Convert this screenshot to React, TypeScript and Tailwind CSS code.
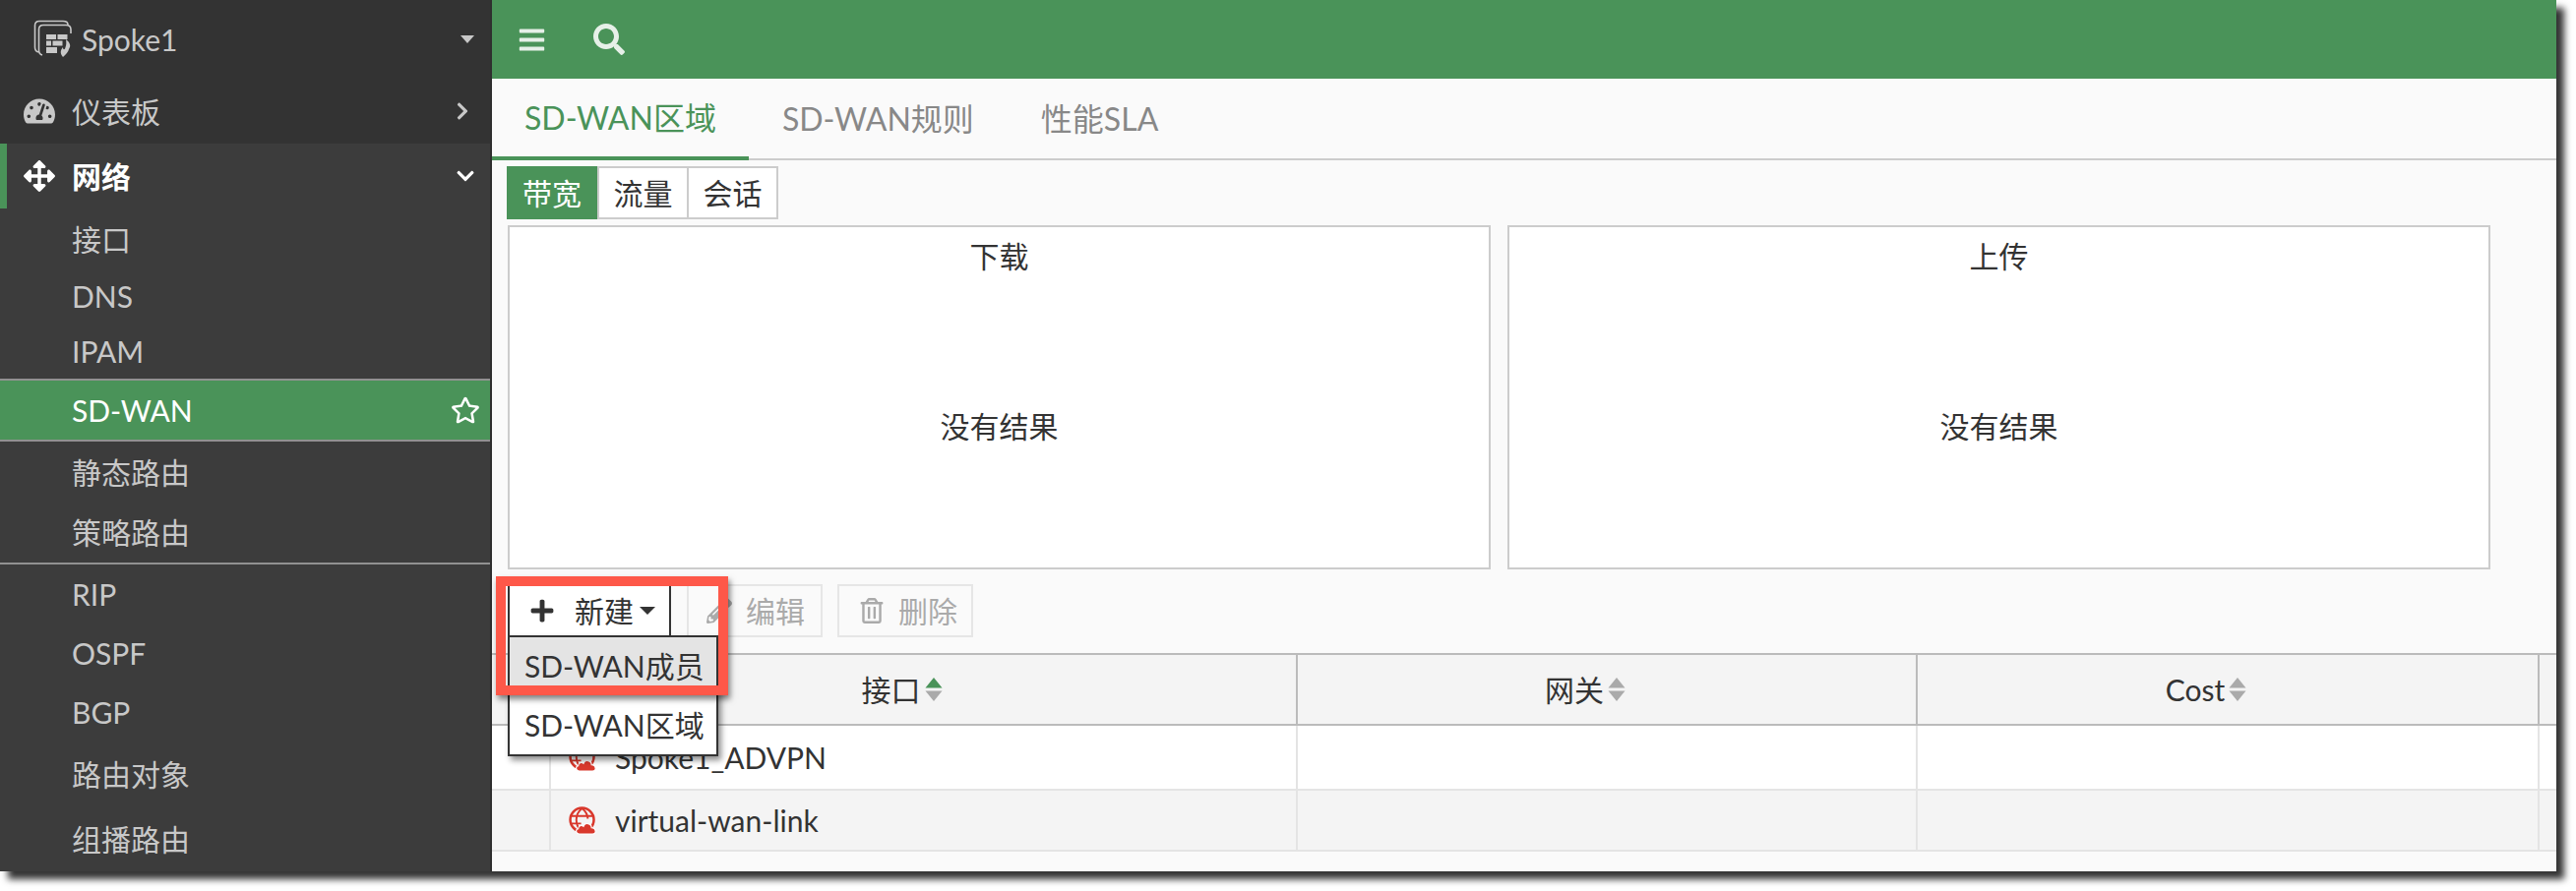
import {
  FaArrowsAlt,
  FaBars,
  FaChevronDown,
  FaChevronRight,
  FaPencilAlt,
  FaPlus,
  FaRegStar,
  FaRegTrashAlt,
  FaSearch,
  FaTachometerAlt,
} from "react-icons/fa";

const NAV_TOP = [
  { label: "接口", h: "h-[66px]" },
  { label: "DNS", h: "h-[60px]" },
  { label: "IPAM", h: "h-[60px]" },
];
const NAV_MIDDLE = ["静态路由", "策略路由"];
const NAV_BOTTOM = [
  { label: "RIP", h: "h-[60px]" },
  { label: "OSPF", h: "h-[60px]" },
  { label: "BGP", h: "h-[60px]" },
  { label: "路由对象", h: "h-[66px]" },
  { label: "组播路由", h: "h-[66px]" },
];

function DeviceIcon() {
  return (
    <svg viewBox="0 0 40 40" className="h-[40px] w-[40px] text-[#c8c8c8]" fill="none" stroke="currentColor">
      <path strokeWidth="1.6" d="M5 33 Q1.5 32 1.5 28 V6 Q1.5 1.5 6 1.5 H30 Q35 1.5 35 5" />
      <path strokeWidth="1.6" d="M9 36 Q5.5 35 5.5 31 V10 Q5.5 5.5 10 5.5 H33 Q38 5.5 38 10 V14" />
      <g fill="currentColor" stroke="none">
        <rect x="13" y="15" width="10" height="5" />
        <rect x="24.5" y="15" width="10" height="5" />
        <rect x="13" y="21.5" width="5" height="5" />
        <rect x="19.5" y="21.5" width="10" height="5" />
        <rect x="13" y="28" width="11" height="6" />
        <path d="M33 20 C38 24 38 27 36 30 C35.5 33 33 35 30 38 C27 35 27 31 30 28 C30 31 32 31 32.5 28 C33.5 26 33.5 23 33 20 Z" />
      </g>
    </svg>
  );
}

function VpnIcon() {
  return (
    <svg viewBox="0 0 30 30" className="h-[29px] w-[29px] shrink-0 text-[#d9382c]">
      <circle cx="14" cy="14" r="12.4" fill="none" stroke="currentColor" strokeWidth="2.6" />
      <path
        d="M14 2 C9 6 8 10 8 14 C8 18 9 22 13 26 M14 2 C19 6 20 10 20 13 M2 10 H26 M2 18 H13"
        fill="none"
        stroke="currentColor"
        strokeWidth="2"
      />
      <path
        fill="currentColor"
        stroke="#fff"
        strokeWidth="1.2"
        d="M11 29 C7.5 29 6.5 24.5 10 23.5 C10 20.5 13.5 19 15.5 21 C17 16.5 24 17.5 24 22.5 C28.5 22.5 30 29 25 29 Z"
      />
    </svg>
  );
}

function SortIcon({ active }: { active?: boolean }) {
  return (
    <svg viewBox="0 0 18 26" className="h-[26px] w-[18px] shrink-0">
      <path d="M9 1 L17.5 11.5 H0.5 Z" strokeLinejoin="round" fill={active ? "#4a9359" : "#aaaaaa"} />
      <path d="M0.5 14.5 H17.5 L9 25 Z" strokeLinejoin="round" fill="#aaaaaa" />
    </svg>
  );
}

function NavItem({ label, h }: { label: string; h: string }) {
  return <div className={`flex items-center pl-[73px] text-[#c8c8c8] ${h}`}>{label}</div>;
}

function Sidebar() {
  return (
    <aside className="flex h-full w-[500px] shrink-0 flex-col overflow-hidden border-r-2 border-[#2f2f2f] bg-[#3c3c3c]">
      <div className="shrink-0 bg-[#333333] text-[#c8c8c8]">
        <div className="flex h-[80px] items-center pl-[34px] pr-[16px]">
          <DeviceIcon />
          <span className="ml-[9px] flex-1">Spoke1</span>
          <span className="h-0 w-0 border-x-[7px] border-t-[8px] border-x-transparent border-t-[#c8c8c8]" />
        </div>
        <div className="flex h-[66px] items-center pl-[24px] pr-[18px]">
          <FaTachometerAlt className="text-[32px]" />
          <span className="ml-[17px] flex-1">仪表板</span>
          <FaChevronRight className="text-[20px]" />
        </div>
      </div>
      <div className="flex h-[66px] shrink-0 items-center border-l-[7px] border-[#4a9359] pl-[17px] pr-[15px] font-bold text-white">
        <FaArrowsAlt className="text-[32px]" />
        <span className="ml-[17px] flex-1">网络</span>
        <FaChevronDown className="text-[20px]" />
      </div>
      {NAV_TOP.map((item) => (
        <NavItem key={item.label} label={item.label} h={item.h} />
      ))}
      <div className="flex h-[64px] shrink-0 items-center border-y-2 border-[#919191] bg-[#4a9359] pl-[73px] pr-[10px] text-white">
        <span className="flex-1">SD-WAN</span>
        <FaRegStar className="text-[30px]" />
      </div>
      {NAV_MIDDLE.map((label) => (
        <NavItem key={label} label={label} h="h-[66px]" />
      ))}
      <div className="h-[2px] shrink-0 bg-[#919191]" />
      {NAV_BOTTOM.map((item) => (
        <NavItem key={item.label} label={item.label} h={`${item.h} shrink-0`} />
      ))}
    </aside>
  );
}

function ChartPanel({ title }: { title: string }) {
  return (
    <div className="flex h-[350px] w-[999px] flex-col border-2 border-[#cccccc] bg-white text-[#333333]">
      <div className="flex h-[57px] items-center justify-center">{title}</div>
      <div className="flex flex-1 items-center justify-center">没有结果</div>
    </div>
  );
}

function DisabledButton({ icon, label, className }: { icon: React.ReactNode; label: string; className: string }) {
  return (
    <div className={`flex h-[54px] items-center border-2 border-[#e6e6e6] text-[#aaaaaa] ${className}`}>
      {icon}
      <span className="ml-[14px]">{label}</span>
    </div>
  );
}

function Toolbar() {
  return (
    <div className="relative flex h-[85px] items-start pl-[16px] pt-[15px]">
      <div className="relative z-10">
        <div className="flex h-[54px] w-[166px] items-center border-2 border-[#333333] bg-white pl-[20px] text-[#333333]">
          <FaPlus className="text-[26px]" />
          <span className="ml-[20px]">新建</span>
          <span className="ml-[6px] h-0 w-0 border-x-[8px] border-t-[8px] border-x-transparent border-t-[#333333]" />
        </div>
        <div className="absolute left-0 top-[52px] w-[214px] border-2 border-[#333333] bg-white text-[#333333] shadow-[3px_4px_6px_rgba(0,0,0,0.45)]">
          <div className="flex h-[58px] items-center bg-[#e4e4e4] pl-[15px]">SD-WAN成员</div>
          <div className="flex h-[61px] items-center pl-[15px]">SD-WAN区域</div>
        </div>
      </div>
      <DisabledButton
        icon={<FaPencilAlt className="text-[26px]" />}
        label="编辑"
        className="ml-[16px] w-[138px] pl-[18px]"
      />
      <DisabledButton
        icon={<FaRegTrashAlt className="text-[26px]" />}
        label="删除"
        className="ml-[15px] w-[138px] pl-[20px]"
      />
      <div className="absolute left-[4px] top-[7px] z-20 h-[121px] w-[236px] border-[10px] border-[#fe5849] shadow-[2px_4px_6px_rgba(0,0,0,0.5)]" />
    </div>
  );
}

function HeaderCell({ label, active }: { label: string; active?: boolean }) {
  return (
    <div className="flex items-center justify-center gap-[4px] border-r-2 border-[#bbbbbb] pr-[44px]">
      <span>{label}</span>
      <SortIcon active={active} />
    </div>
  );
}

const GRID = "grid grid-cols-[60px_759px_630px_632px_1fr]";

function Row({ name, striped, h }: { name: string; striped?: boolean; h: string }) {
  return (
    <div className={`${GRID} border-b-2 border-[#e4e4e4] ${h} ${striped ? "bg-[#f4f4f4]" : "bg-white"}`}>
      <div className="border-r-2 border-[#e4e4e4]" />
      <div className="flex items-center gap-[18px] border-r-2 border-[#e4e4e4] pl-[18px] text-[#333333]">
        <VpnIcon />
        {name}
      </div>
      <div className="border-r-2 border-[#e4e4e4]" />
      <div className="border-r-2 border-[#e4e4e4]" />
      <div />
    </div>
  );
}

export default function App() {
  return (
    <div className="h-[906px] w-[2618px] overflow-hidden bg-white font-[Lato,'Noto_Sans_CJK_SC',sans-serif] text-[30px] leading-none">
      <div className="flex h-[886px] w-[2598px] shadow-[8px_8px_7px_rgba(0,0,0,0.8)]">
        <Sidebar />
        <main className="flex min-w-0 flex-1 flex-col bg-[#fafafa]">
          <header className="flex h-[80px] shrink-0 items-center bg-[#4a9359] pl-[26px] text-[#e6f0e8]">
            <FaBars className="text-[29px]" />
            <FaSearch className="ml-[48px] text-[32px]" />
          </header>
          <nav className="flex h-[83px] shrink-0 border-b-2 border-[#cccccc] text-[32px] text-[#888888]">
            <div className="-mb-[2px] flex items-center border-b-[4px] border-[#4a9359] px-[33px] text-[#4a9359]">
              SD-WAN区域
            </div>
            <div className="flex items-center px-[34px]">SD-WAN规则</div>
            <div className="flex items-center px-[34px]">性能SLA</div>
          </nav>
          <div className="ml-[15px] mt-[6px] flex h-[54px] w-fit shrink-0 text-[#333333]">
            <div className="flex w-[92px] items-center justify-center bg-[#4a9359] text-white">带宽</div>
            <div className="flex w-[93px] items-center justify-center border-2 border-[#cccccc] bg-white">流量</div>
            <div className="-ml-[2px] flex w-[93px] items-center justify-center border-2 border-[#cccccc] bg-white">
              会话
            </div>
          </div>
          <div className="ml-[16px] mt-[6px] flex shrink-0 gap-[17px]">
            <ChartPanel title="下载" />
            <ChartPanel title="上传" />
          </div>
          <Toolbar />
          <div
            className={`${GRID} h-[74px] shrink-0 border-y-2 border-[#bbbbbb] bg-[#f4f4f4] text-[#333333]`}
          >
            <div className="border-r-2 border-[#e4e4e4]" />
            <HeaderCell label="接口" active />
            <HeaderCell label="网关" />
            <HeaderCell label="Cost" />
            <div />
          </div>
          <Row name="Spoke1_ADVPN" h="h-[66px]" />
          <Row name="virtual-wan-link" striped h="h-[62px]" />
        </main>
      </div>
    </div>
  );
}
